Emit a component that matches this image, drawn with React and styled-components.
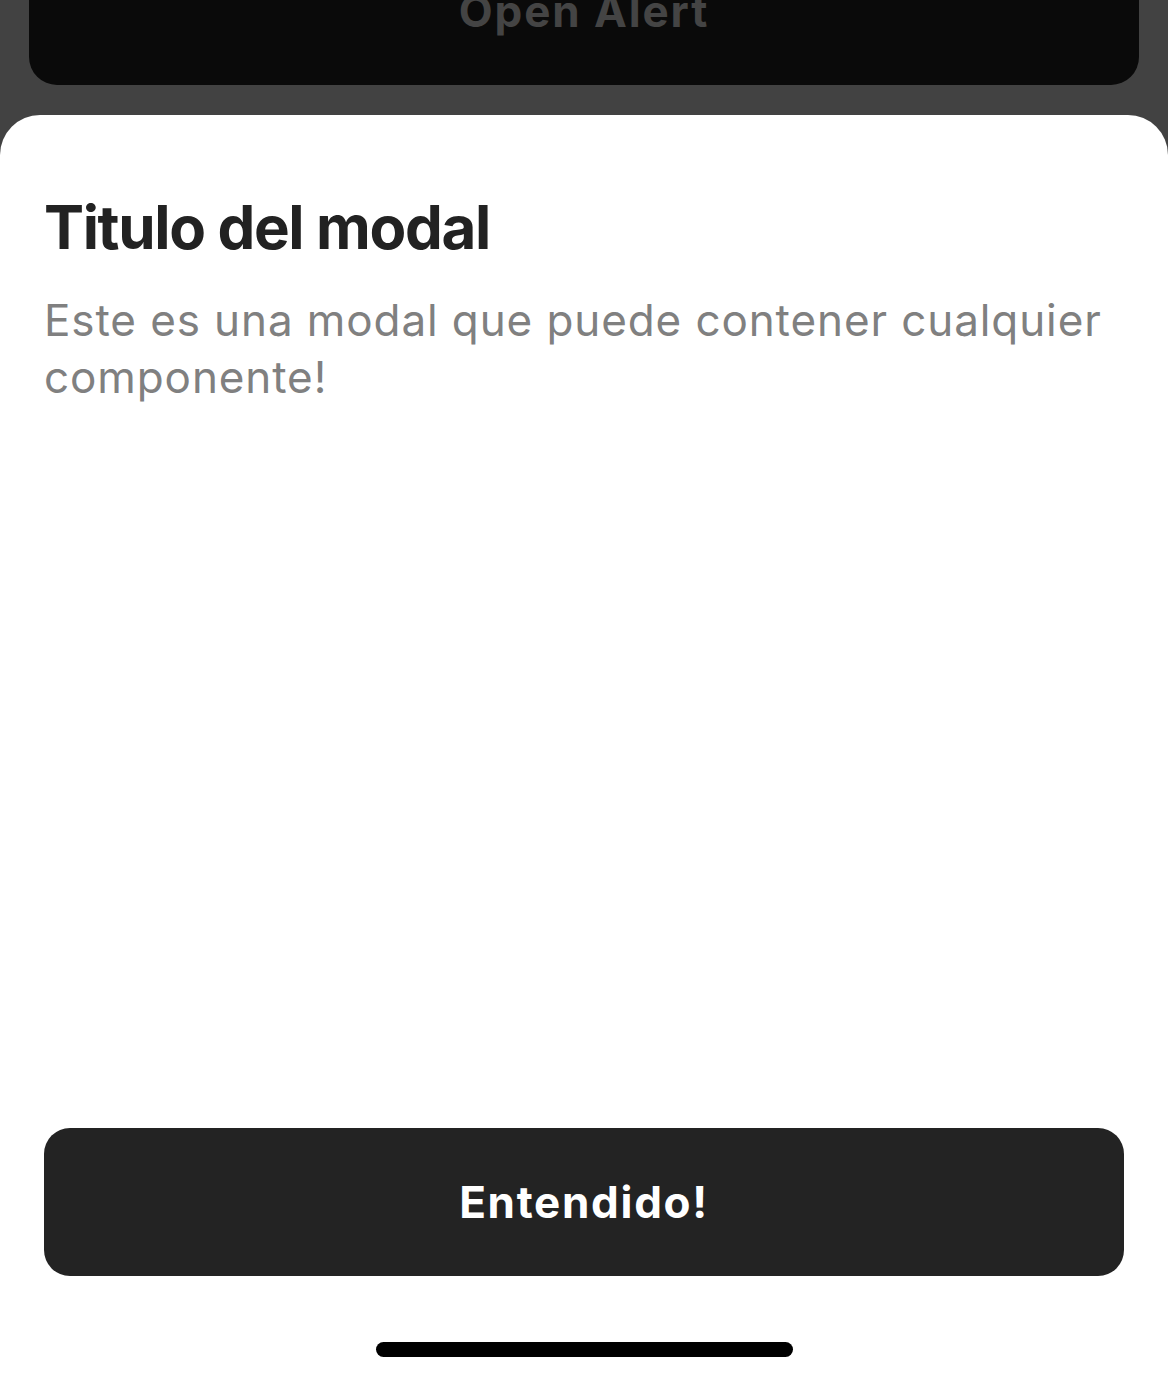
import React from "react";
import styled, { createGlobalStyle } from "styled-components";

const GlobalStyle = createGlobalStyle`
  html, body { margin: 0; padding: 0; }
  body { font-family: Inter, "Noto Sans", "Liberation Sans", sans-serif; }
  * { box-sizing: border-box; }
`;

const Screen = styled.div`
  width: 1168px;
  height: 1379px;
  overflow: hidden;
  background: #424242;
  display: flex;
  flex-direction: column;
`;

const BackButton = styled.button`
  flex: none;
  margin: -63px 29px 0;
  height: 148px;
  border: none;
  border-radius: 28px;
  background: #0a0a0a;
  color: #444444;
  font-family: inherit;
  font-size: 44px;
  font-weight: 700;
  line-height: 1;
  letter-spacing: 1.9px;
  display: flex;
  align-items: center;
  justify-content: center;
  padding: 0;
`;

const Sheet = styled.div`
  flex: 1;
  margin-top: 30px;
  background: #ffffff;
  border-radius: 40px 40px 0 0;
  padding: 76px 44px 0;
  display: flex;
  flex-direction: column;
`;

const Title = styled.h1`
  margin: 0;
  font-size: 60px;
  line-height: 72px;
  font-weight: 700;
  letter-spacing: -1.35px;
  color: #222222;
`;

const Description = styled.p`
  margin: 29px 0 0;
  font-size: 44px;
  line-height: 57px;
  font-weight: 400;
  color: #808080;
  letter-spacing: 0.9px;
`;

const Spacer = styled.div`
  flex: 1;
`;

const PrimaryButton = styled.button`
  flex: none;
  height: 148px;
  border: none;
  border-radius: 26px;
  background: #232323;
  color: #ffffff;
  font-family: inherit;
  font-size: 44px;
  font-weight: 700;
  line-height: 1;
  letter-spacing: 1.7px;
  display: flex;
  align-items: center;
  justify-content: center;
  padding: 0;
`;

const HomeIndicator = styled.div`
  align-self: center;
  width: 417px;
  height: 15px;
  border-radius: 8px;
  background: #000000;
  margin: 66px 0 22px;
`;

export default function App() {
  return (
    <>
      <GlobalStyle />
      <Screen>
        <BackButton>Open Alert</BackButton>
        <Sheet>
          <Title>Titulo del modal</Title>
          <Description>
            Este es una modal que puede contener cualquier componente!
          </Description>
          <Spacer />
          <PrimaryButton>Entendido!</PrimaryButton>
          <HomeIndicator />
        </Sheet>
      </Screen>
    </>
  );
}
